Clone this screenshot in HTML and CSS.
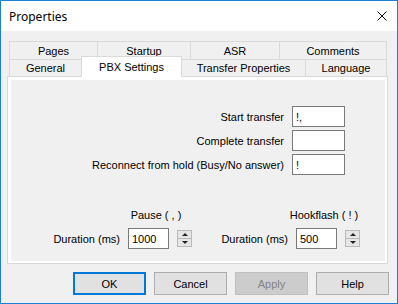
FILE: index.html
```html
<!DOCTYPE html>
<html lang="en">
<head>
    <meta charset="UTF-8">
    <title>Properties</title>
    <link rel="stylesheet" href="styles.css">
</head>
<body>
    <div class="window">
        <div class="titlebar">
            <span class="title">Properties</span>
            <svg class="close" width="10" height="10" viewBox="0 0 10 10">
                <path d="M0.5 0.5L9.5 9.5M9.5 0.5L0.5 9.5" stroke="#000" stroke-width="1"/>
            </svg>
        </div>
        <div class="client">
            <div class="tabs">
                <div class="tab-row">
                    <div class="tab tab-pages">Pages</div>
                    <div class="tab tab-startup">Startup</div>
                    <div class="tab tab-asr">ASR</div>
                    <div class="tab tab-comments">Comments</div>
                </div>
                <div class="tab-row row-front">
                    <div class="tab tab-general">General</div>
                    <div class="tab tab-pbx selected">PBX Settings</div>
                    <div class="tab tab-transfer">Transfer Properties</div>
                    <div class="tab tab-language">Language</div>
                </div>
            </div>
            <div class="panel">
                <div class="page">
                    <div class="fields">
                        <label>Start transfer</label>
                        <div class="box">!,</div>
                        <label>Complete transfer</label>
                        <div class="box"></div>
                        <label>Reconnect from hold (Busy/No answer)</label>
                        <div class="box">!</div>
                    </div>
                    <div class="durations">
                        <div class="group">
                            <div class="heading"><span>Pause ( , )</span></div>
                            <label>Duration (ms)</label>
                            <div class="box">1000</div>
                            <div class="spin"><span class="up"></span><span class="down"></span></div>
                        </div>
                        <div class="group">
                            <div class="heading"><span>Hookflash ( ! )</span></div>
                            <label>Duration (ms)</label>
                            <div class="box">500</div>
                            <div class="spin"><span class="up"></span><span class="down"></span></div>
                        </div>
                    </div>
                </div>
            </div>
            <div class="buttons">
                <button class="default">OK</button>
                <button>Cancel</button>
                <button class="disabled">Apply</button>
                <button>Help</button>
            </div>
        </div>
    </div>
</body>
</html>
```
FILE: styles.css
```css
body {
    margin: 0;
    background: #fff;
    font-family: 'Liberation Sans', Arial, sans-serif;
    font-size: 11px;
    color: #000;
}
.window {
    width: 398px;
    height: 304px;
    box-sizing: border-box;
    border: 1px solid #1a7fd6;
    background: #f0f0f0;
    display: flex;
    flex-direction: column;
}
.titlebar {
    height: 30px;
    flex: none;
    background: #fff;
    display: flex;
    align-items: center;
    justify-content: space-between;
    padding: 0 10px 0 8px;
}
.title {
    font-family: 'Noto Sans', sans-serif;
    font-size: 12px;
}
.client {
    flex: 1;
    padding: 10px 8px 8px 6px;
    display: flex;
    flex-direction: column;
}
.tabs {
    margin-left: 2px;
}
.tab-row {
    display: flex;
    align-items: flex-end;
}
.tab {
    box-sizing: border-box;
    height: 18px;
    margin-right: -1px;
    border: 1px solid #d9d9d9;
    border-bottom: none;
    background: #f0f0f0;
    display: flex;
    align-items: center;
    justify-content: center;
}
.row-front .tab {
    height: 17px;
}
.row-front .tab.selected {
    position: relative;
    z-index: 1;
    height: 21px;
    margin-top: -3px;
    margin-bottom: -1px;
    background: #fff;
    padding-bottom: 1px;
}
.tab-pages { width: 89px; }
.tab-startup { width: 94px; }
.tab-asr { width: 90px; }
.tab-comments { width: 108px; }
.tab-general { width: 73px; }
.tab-pbx { width: 101px; }
.tab-transfer { width: 125px; }
.tab-language { width: 82px; }
.panel {
    width: 381px;
    height: 188px;
    box-sizing: border-box;
    border: 1px solid #d9d9d9;
    background: #fff;
    padding: 3px 2px 2px 3px;
}
.page {
    height: 100%;
    background: #f0f0f0;
    display: flex;
    flex-direction: column;
}
.fields {
    margin-top: 26px;
    padding-right: 40px;
    display: grid;
    grid-template-columns: auto 53px;
    justify-content: end;
    column-gap: 8px;
    row-gap: 3px;
    align-items: center;
}
.fields label {
    text-align: right;
}
.box {
    box-sizing: border-box;
    height: 21px;
    border: 1px solid #7a7a7a;
    background: #fff;
    padding-left: 3px;
    display: flex;
    align-items: center;
}
.durations {
    margin-top: 34px;
    padding-left: 38px;
    display: flex;
    gap: 25px;
}
.group {
    display: grid;
    grid-template-columns: 71px 41px 15px;
    column-gap: 8px;
    row-gap: 6px;
    align-items: center;
}
.group label {
    text-align: right;
}
.heading {
    grid-column: 2 / 4;
    display: flex;
    justify-content: center;
    padding-right: 8px;
    line-height: 13px;
    white-space: nowrap;
}
.spin {
    box-sizing: border-box;
    height: 17px;
    border: 1px solid #b9b9b9;
    background: #e6e6e6;
    display: flex;
    flex-direction: column;
}
.spin span {
    flex: 1;
    display: flex;
    align-items: center;
    justify-content: center;
}
.spin .up {
    border-bottom: 1px solid #b9b9b9;
}
.spin .up::before {
    content: "";
    border-left: 3px solid transparent;
    border-right: 3px solid transparent;
    border-bottom: 3px solid #222;
}
.spin .down::before {
    content: "";
    border-left: 3px solid transparent;
    border-right: 3px solid transparent;
    border-top: 3px solid #222;
}
.buttons {
    margin-top: 8px;
    display: flex;
    justify-content: flex-end;
    gap: 8px;
}
button {
    width: 73px;
    height: 23px;
    box-sizing: border-box;
    font-family: 'Liberation Sans', Arial, sans-serif;
    font-size: 11px;
    color: #000;
    background: #e1e1e1;
    border: 1px solid #adadad;
    padding: 0;
}
button.default {
    border: 2px solid #0078d7;
}
button.disabled {
    background: #cccccc;
    border-color: #bfbfbf;
    color: #838383;
}
```
